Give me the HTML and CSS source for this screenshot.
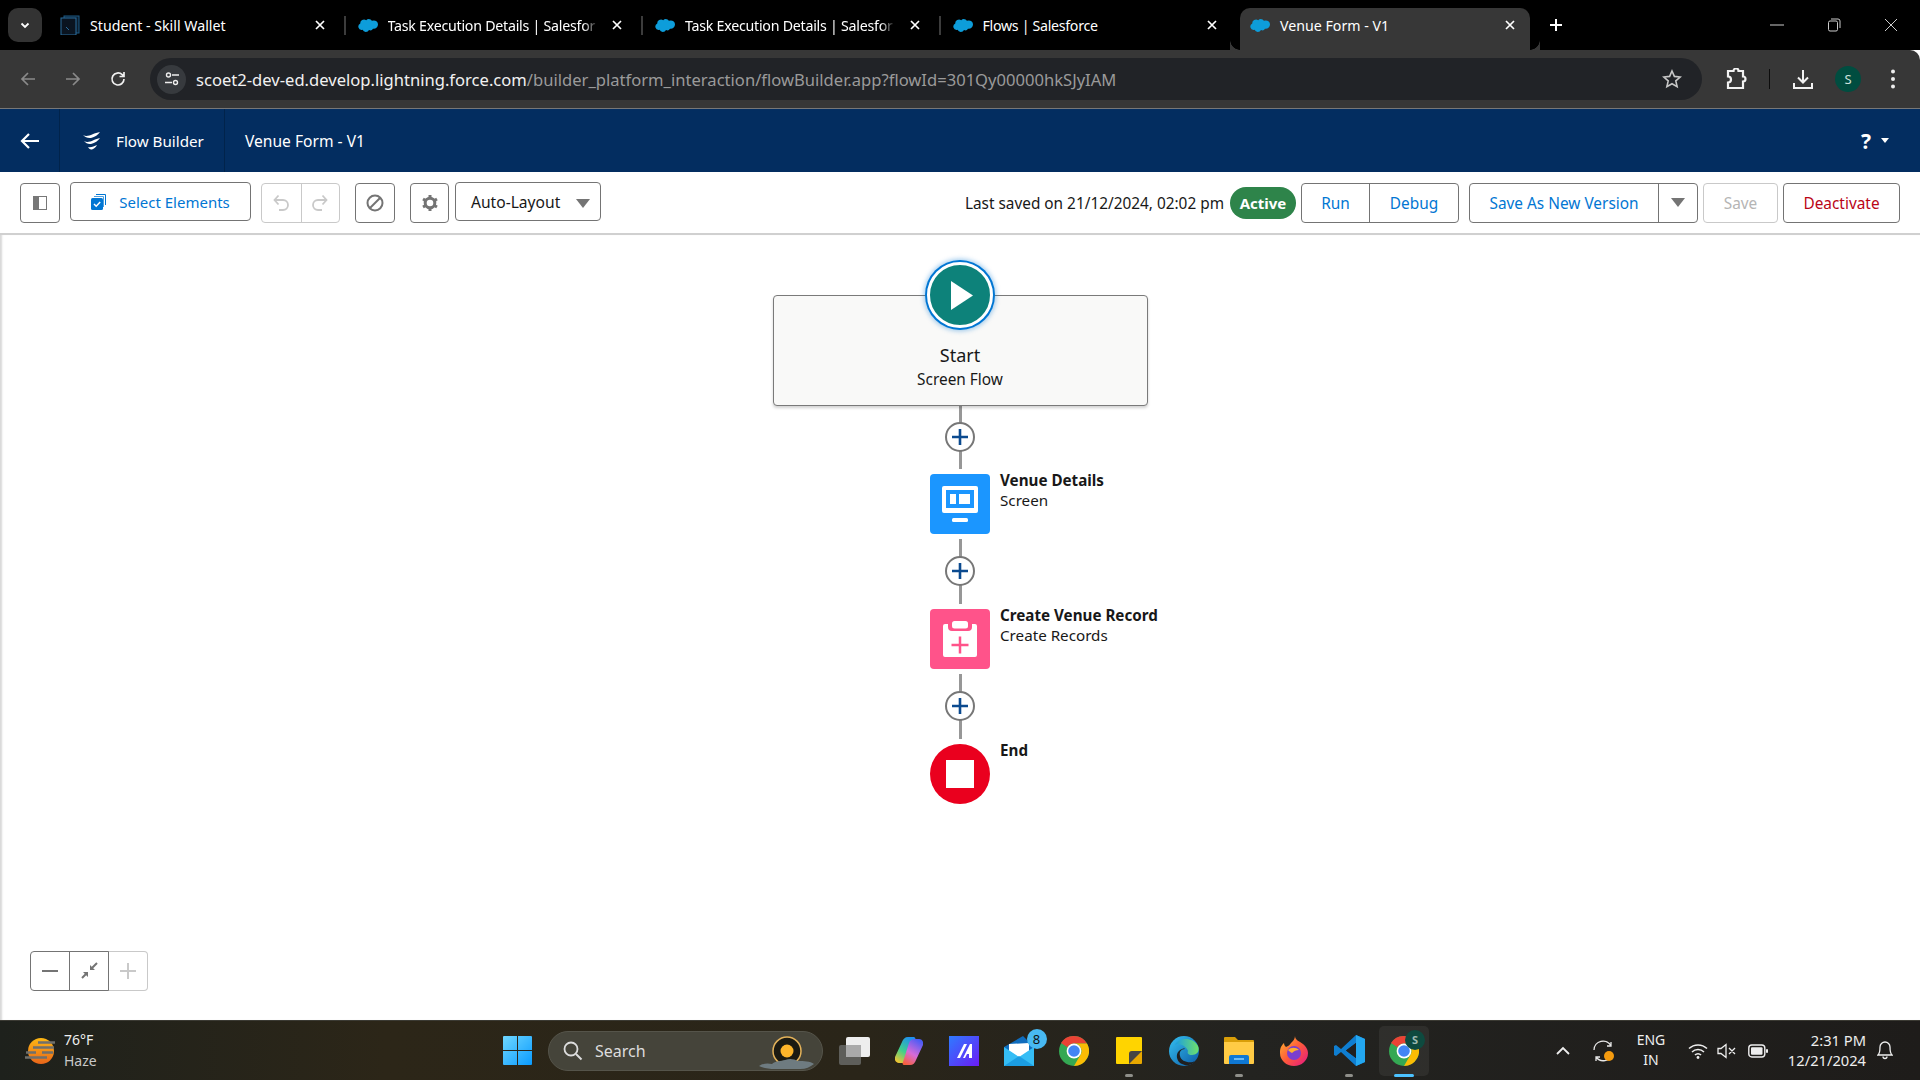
FILE: index.html
```html
<!DOCTYPE html>
<html lang="en">
<head>
<meta charset="utf-8">
<title>Venue Form - V1</title>
<link rel="stylesheet" href="styles.css">
</head>
<body>
<svg class="defs" width="0" height="0" aria-hidden="true">
  <defs>
    <symbol id="cloud" viewBox="0 0 20 14"><path fill="#0d9dda" d="M8.2 2.2A3.5 3.5 0 0 1 10.8 1a3.6 3.6 0 0 1 3.1 1.8 4.2 4.2 0 0 1 1.8-.4A4.2 4.2 0 0 1 20 6.600a4.200 4.200 0 0 1-5 4.100 3 3 0 0 1-4 1.300 3.500 3.500 0 0 1-6.400-.2 3.200 3.200 0 0 1-.7.1A3.300 3.300 0 0 1 2.300 5.600 3.700 3.700 0 0 1 8.200 2.200Z"/></symbol>
    <symbol id="x" viewBox="0 0 12 12"><path d="M2 2l8 8M10 2l-8 8" stroke="#fff" stroke-width="1.7" fill="none"/></symbol>
    <symbol id="plus" viewBox="0 0 30 30"><circle cx="15" cy="15" r="14" fill="#fff" stroke="#777" stroke-width="2"/><path d="M15 7v16M7 15h16" stroke="#0b4a8f" stroke-width="2.6" fill="none"/></symbol>
    <symbol id="chrome" viewBox="0 0 30 30">
      <circle cx="15" cy="15" r="15" fill="#34a853"/>
      <path d="M15 0a15 15 0 0 1 13 7.5H15a7.5 7.5 0 0 0-6.5 3.75L2 7A15 15 0 0 1 15 0Z" fill="#ea4335"/>
      <path d="M28 7.5A15 15 0 0 1 15 30l6.5-11.25A7.5 7.5 0 0 0 15 7.5Z" fill="#fbbc04"/>
      <circle cx="15" cy="15" r="7.4" fill="#fff"/><circle cx="15" cy="15" r="5.8" fill="#4285f4"/>
    </symbol>
  </defs>
</svg>

<header class="tabstrip">
  <button class="tabsearch"><svg width="12" height="12" viewBox="0 0 12 12"><path d="M2.5 4.5L6 8l3.5-3.5" stroke="#fff" stroke-width="1.8" fill="none"/></svg></button>
  <div class="tab">
    <svg class="favicon" viewBox="0 0 20 20"><rect x="4" y="1" width="15" height="17" fill="#0b1c2c" stroke="#1d5a86"/><rect x="1" y="3" width="15" height="17" fill="#0a1420" stroke="#2a6c9c"/><path d="M6 12l3 3" stroke="#2a6c9c"/></svg>
    <span class="tabtitle">Student - Skill Wallet</span>
    <svg class="tabx"><use href="#x"/></svg>
  </div>
  <div class="tab sep">
    <svg class="favicon"><use href="#cloud"/></svg>
    <span class="tabtitle fade">Task Execution Details | Salesfor</span>
    <svg class="tabx"><use href="#x"/></svg>
  </div>
  <div class="tab sep">
    <svg class="favicon"><use href="#cloud"/></svg>
    <span class="tabtitle fade">Task Execution Details | Salesfor</span>
    <svg class="tabx"><use href="#x"/></svg>
  </div>
  <div class="tab sep">
    <svg class="favicon"><use href="#cloud"/></svg>
    <span class="tabtitle tight">Flows | Salesforce</span>
    <svg class="tabx"><use href="#x"/></svg>
  </div>
  <div class="tab active">
    <svg class="favicon"><use href="#cloud"/></svg>
    <span class="tabtitle">Venue Form - V1</span>
    <svg class="tabx"><use href="#x"/></svg>
  </div>
  <svg class="newtab" width="16" height="16" viewBox="0 0 16 16"><path d="M8 2v12M2 8h12" stroke="#fff" stroke-width="2"/></svg>
  <div class="winctl">
    <svg width="14" height="14" viewBox="0 0 14 14"><path d="M0 7h14" stroke="#ccc"/></svg>
    <svg width="14" height="14" viewBox="0 0 14 14"><rect x="1.5" y="3" width="9" height="10" rx="1.5" fill="none" stroke="#ccc"/><path d="M4 1h7a2 2 0 0 1 2 2v7" fill="none" stroke="#ccc"/></svg>
    <svg width="14" height="14" viewBox="0 0 14 14"><path d="M1 1l12 12M13 1L1 13" stroke="#ccc"/></svg>
  </div>
</header>

<nav class="browserbar">
  <svg class="navico" width="18" height="18" viewBox="0 0 18 18"><path d="M16 9H3M9 3L3 9l6 6" stroke="#8a8a8a" stroke-width="1.7" fill="none"/></svg>
  <svg class="navico" width="18" height="18" viewBox="0 0 18 18"><path d="M2 9h13M9 3l6 6-6 6" stroke="#8a8a8a" stroke-width="1.7" fill="none"/></svg>
  <svg class="navico" width="18" height="18" viewBox="0 0 18 18"><path d="M15 9a6 6 0 1 1-1.8-4.3L15 6.5M15 2v4.5h-4.5" stroke="#f0f0f0" stroke-width="1.7" fill="none"/></svg>
  <div class="urlpill">
    <span class="siteinfo"><svg width="16" height="16" viewBox="0 0 16 16"><circle cx="4.5" cy="4" r="2" fill="none" stroke="#eee" stroke-width="1.4"/><path d="M8 4h7M1 11.5h7" stroke="#eee" stroke-width="1.4"/><circle cx="11.5" cy="11.5" r="2" fill="none" stroke="#eee" stroke-width="1.4"/></svg></span>
    <span class="url"><span class="host">scoet2-dev-ed.develop.lightning.force.com</span>/builder_platform_interaction/flowBuilder.app?flowId=301Qy00000hkSJyIAM</span>
    <svg class="star" width="20" height="20" viewBox="0 0 20 20"><path d="M10 2l2.4 5.4 5.8.6-4.4 3.9 1.3 5.7L10 14.7l-5.1 2.9 1.3-5.7L1.8 8l5.8-.6Z" fill="none" stroke="#c7c7c7" stroke-width="1.6"/></svg>
  </div>
  <svg class="extico" width="22" height="22" viewBox="0 0 22 22"><path d="M3 3h5.500a2.500 2.500 0 0 1 5 0H18v5.500a2.500 2.500 0 0 1 0 5V20H3v-5.500a3 3 0 0 0 3-3 3 3 0 0 0-3-3Z" fill="none" stroke="#f2f2f2" stroke-width="2.200"/></svg>
  <span class="barsep"></span>
  <svg class="dlico" width="22" height="22" viewBox="0 0 22 22"><path d="M11 2v12M6 9.5l5 5 5-5M2 15v5h18v-5" stroke="#f2f2f2" stroke-width="2" fill="none"/></svg>
  <span class="avatar">S</span>
  <svg class="kebab" width="6" height="22" viewBox="0 0 6 22"><circle cx="3" cy="3.5" r="2" fill="#eee"/><circle cx="3" cy="11" r="2" fill="#eee"/><circle cx="3" cy="18.5" r="2" fill="#eee"/></svg>
</nav>

<div class="appbar">
  <div class="appback"><svg width="20" height="18" viewBox="0 0 20 18"><path d="M19 9H2M9 2L2 9l7 7" stroke="#fff" stroke-width="2.2" fill="none"/></svg></div>
  <div class="appname">
    <svg width="20" height="18" viewBox="0 0 20 18"><path d="M1 3c5 3 10-2 17-3-2 3-5 5-9 6-3 .5-6-1-8-3ZM2 9c5 3 10-2 16-3-2 3-5 5-9 6-3 .5-5-1-7-3ZM6 15c3 1 6-1 9-2-1 2-3 4-5 4.500-2 .5-3-1-4-2.500Z" fill="#fff"/></svg>
    <span>Flow Builder</span>
  </div>
  <div class="flowname">Venue Form - V1</div>
  <div class="help"><span class="q">?</span><span class="caret"></span></div>
</div>

<div class="toolbar">
  <button class="btn iconbtn"><svg width="14" height="14" viewBox="0 0 14 14"><rect x=".5" y=".5" width="13" height="13" fill="#fff" stroke="#777"/><rect x="1" y="1" width="5" height="12" fill="#777"/></svg></button>
  <button class="btn select"><svg width="16" height="18" viewBox="0 0 16 18"><path d="M5 1h9a1 1 0 0 1 1 1v10h-1V2H5Z" fill="#0176d3"/><path d="M3 3h9a1 1 0 0 1 1 1v10h-1V4H3Z" fill="#0176d3" opacity=".7"/><rect y="5" width="12" height="12" rx="1.5" fill="#0176d3"/><path d="M3 11l2.2 2.2L9.2 9" stroke="#fff" stroke-width="1.5" fill="none"/></svg>Select Elements</button>
  <div class="group disabled">
    <button class="gbtn"><svg width="16" height="18" viewBox="0 0 16 18"><path d="M2 6h8a4.500 4.500 0 0 1 0 10H6M5.500 1.500L1.500 6l4 4.500" stroke="#c9c9c9" stroke-width="1.800" fill="none"/></svg></button>
    <button class="gbtn"><svg width="16" height="18" viewBox="0 0 16 18"><path d="M14 6H6a4.500 4.500 0 0 0 0 10h4M10.500 1.500l4 4.500-4 4.500" stroke="#c9c9c9" stroke-width="1.800" fill="none"/></svg></button>
  </div>
  <button class="btn iconbtn ban"><svg width="18" height="18" viewBox="0 0 18 18"><circle cx="9" cy="9" r="7.500" fill="none" stroke="#747474" stroke-width="2"/><path d="M4 14L14 4" stroke="#747474" stroke-width="2"/></svg></button>
  <button class="btn iconbtn gear"><svg width="18" height="18" viewBox="0 0 18 18"><circle cx="9" cy="9" r="4.800" fill="none" stroke="#747474" stroke-width="3"/><path d="M9 1v3M9 14v3M2 5l2.600 1.500M13.400 11.500L16 13M2 13l2.600-1.500M13.400 6.500L16 5" stroke="#747474" stroke-width="3"/></svg></button>
  <button class="btn modeselect">Auto-Layout<span class="tri"></span></button>

  <div class="rightside">
    <span class="saved">Last saved on 21/12/2024, 02:02 pm</span>
    <span class="badge">Active</span>
    <div class="group run">
      <button class="gbtn link wrun">Run</button>
      <button class="gbtn link wdebug">Debug</button>
    </div>
    <div class="group saveas">
      <button class="gbtn link wsaveas">Save As New Version</button>
      <button class="gbtn wdrop"><span class="tri"></span></button>
    </div>
    <button class="btn save">Save</button>
    <button class="btn deactivate">Deactivate</button>
  </div>
</div>

<main class="canvas">
  <div class="startcard">
    <div class="startcircle"><svg width="24" height="31" viewBox="0 0 24 31"><path d="M1 1l22 14.500L1 30Z" fill="#fff"/></svg></div>
    <div class="starttitle">Start</div>
    <div class="startsub">Screen Flow</div>
  </div>
  <div class="connector first"><svg class="plusico"><use href="#plus"/></svg></div>
  <div class="node">
    <div class="nodeicon blue"><svg width="60" height="60" viewBox="0 0 60 60"><rect x="12" y="12" width="36" height="27" rx="2" fill="#fff"/><rect x="16" y="16" width="28" height="18" fill="#1b96ff"/><rect x="20" y="20" width="6" height="10" fill="#fff"/><rect x="29" y="20" width="11" height="10" fill="#fff"/><rect x="22" y="44" width="16" height="4" rx="1.500" fill="#fff"/></svg></div>
    <div class="nodelabel"><b>Venue Details</b><span>Screen</span></div>
  </div>
  <div class="connector"><svg class="plusico"><use href="#plus"/></svg></div>
  <div class="node">
    <div class="nodeicon pink"><svg width="60" height="60" viewBox="0 0 60 60"><path d="M15 15h3v3a4 4 0 0 0 4 4h16a4 4 0 0 0 4-4v-3h3a2 2 0 0 1 2 2v29a2 2 0 0 1-2 2H15a2 2 0 0 1-2-2V17a2 2 0 0 1 2-2Z" fill="#fff"/><rect x="22" y="12" width="16" height="7.500" rx="2.500" fill="#fff"/><path d="M30 27.500v17M21.500 36h17" stroke="#ff538a" stroke-width="2.500"/></svg></div>
    <div class="nodelabel"><b>Create Venue Record</b><span>Create Records</span></div>
  </div>
  <div class="connector"><svg class="plusico"><use href="#plus"/></svg></div>
  <div class="node">
    <div class="nodeicon red"><span class="stop"></span></div>
    <div class="nodelabel"><b>End</b></div>
  </div>

  <div class="zoomctl">
    <button class="zbtn"><svg width="18" height="18" viewBox="0 0 18 18"><path d="M1 9h16" stroke="#747474" stroke-width="2"/></svg></button>
    <button class="zbtn"><svg width="18" height="18" viewBox="0 0 18 18"><path d="M17 1l-5 5M7 11l-5 5" stroke="#747474" stroke-width="2"/><path d="M10 3v5h5ZM8 15v-5H3Z" fill="#747474"/></svg></button>
    <button class="zbtn off"><svg width="18" height="18" viewBox="0 0 18 18"><path d="M1 9h16M9 1v16" stroke="#c9c9c9" stroke-width="2"/></svg></button>
  </div>
</main>

<footer class="taskbar">
  <div class="weather">
    <svg width="30" height="28" viewBox="0 0 30 28"><defs><linearGradient id="sun" x1="0" y1="0" x2="0" y2="1"><stop offset="0" stop-color="#fdb813"/><stop offset="1" stop-color="#e8651a"/></linearGradient></defs><circle cx="16" cy="14" r="13" fill="url(#sun)"/><path d="M13 5.500h17M8 10.500h21M1 15.500h10M17 15.500h11M0 20.500h22" stroke="#70706c" stroke-width="2.600"/></svg>
    <div class="wtext"><span>76°F</span><span class="dim">Haze</span></div>
  </div>
  <div class="tbicons">
    <div class="tbcell start"><svg width="29" height="29" viewBox="0 0 29 29"><defs><linearGradient id="win" x1="0" y1="0" x2="1" y2="1"><stop offset="0" stop-color="#6fd7ff"/><stop offset="1" stop-color="#0a9bff"/></linearGradient></defs><path d="M1 0h13v14H0V1a1 1 0 0 1 1-1ZM15 0h13a1 1 0 0 1 1 1v13H15ZM0 15h14v14H1a1 1 0 0 1-1-1ZM15 15h14v13a1 1 0 0 1-1 1H15Z" fill="url(#win)"/></svg></div>
    <div class="searchbox">
      <svg width="20" height="20" viewBox="0 0 20 20"><circle cx="8" cy="8" r="6.500" fill="none" stroke="#ddd" stroke-width="1.800"/><path d="M13 13l5.500 5.500" stroke="#ddd" stroke-width="2"/></svg>
      <span>Search</span>
      <svg class="sunart" width="56" height="34" viewBox="0 0 56 34"><circle cx="28" cy="15" r="14" fill="#1b1a12" stroke="#e3b25a" stroke-width="1.500"/><circle cx="28" cy="15" r="6.500" fill="#fdb52a"/><path d="M0 30c5-3 9-3 13-2 3-3 9-3 13-4 5-2 9-1 13 1 6 0 12 0 16 3-4 3-8 5-14 5H16C10 33 4 32 0 30Z" fill="#6e7b80"/></svg>
    </div>
    <div class="tbcell"><svg width="31" height="28" viewBox="0 0 31 28"><rect x="0" y="8" width="22" height="20" rx="2" fill="#5e5e5a"/><rect x="7" y="0" width="24" height="20" rx="2" fill="#eee"/><rect x="7" y="8" width="15" height="12" fill="#aaa"/></svg></div>
    <div class="tbcell"><svg width="28" height="28" viewBox="0 0 28 28"><defs><linearGradient id="cp1" x1=".7" y1="0" x2=".2" y2="1"><stop offset="0" stop-color="#1f8ff0"/><stop offset=".55" stop-color="#3fd08c"/><stop offset="1" stop-color="#f2c531"/></linearGradient><linearGradient id="cp2" x1=".7" y1="0" x2=".2" y2="1"><stop offset="0" stop-color="#4b5cf5"/><stop offset=".55" stop-color="#d66bd9"/><stop offset="1" stop-color="#f7603d"/></linearGradient></defs><path d="M7 5C8 2 10 0 13 0h5c2 0 3 1 2 3l-6 19c-1 3-3 4-6 4H4c-3 0-5-3-4-6Z" fill="url(#cp1)"/><path d="M21 23c-1 3-3 5-6 5h-5c-2 0-3-1-2-3l6-19c1-3 3-4 6-4h4c3 0 5 3 4 6Z" fill="url(#cp2)"/></svg></div>
    <div class="tbcell"><svg width="30" height="30" viewBox="0 0 30 30"><defs><linearGradient id="ms" x1="0" y1="0" x2="1" y2="1"><stop offset="0" stop-color="#2f7bff"/><stop offset="1" stop-color="#6a1cf5"/></linearGradient></defs><rect width="30" height="30" fill="url(#ms)"/><path d="M8 22L15 8h3l-7 14ZM14 22L21 8h2v14h-3v-4h-2l-2 4Z" fill="#fff"/></svg></div>
    <div class="tbcell"><svg width="30" height="30" viewBox="0 0 30 30"><path d="M0 11L19 0l11 11v19H0Z" fill="#0f6cbd"/><path d="M5 8l20-1v10l-10 5L5 15Z" fill="#fff"/><path d="M0 11l15 10 15-10v19H0Z" fill="#35bdf5"/><path d="M0 30l15-10 15 10Z" fill="#1b9de2"/></svg><span class="mailbadge">8</span></div>
    <div class="tbcell"><svg width="30" height="30"><use href="#chrome"/></svg></div>
    <div class="tbcell"><svg width="26" height="27" viewBox="0 0 26 27"><path d="M1 0h24a1 1 0 0 1 1 1v17l-8 9H1a1 1 0 0 1-1-1V1a1 1 0 0 1 1-1Z" fill="#ffd400"/><path d="M26 14v12a1 1 0 0 1-1 1H13V17a3 3 0 0 1 3-3Z" fill="#e8a800"/><path d="M13 27V17a3 3 0 0 1 3-3h10Z" fill="#444"/></svg><i class="pip"></i></div>
    <div class="tbcell"><svg width="30" height="30" viewBox="0 0 30 30"><defs><linearGradient id="ed" x1="0" y1="0" x2="1" y2="1"><stop offset="0" stop-color="#35c1f1"/><stop offset="1" stop-color="#0c59a4"/></linearGradient><linearGradient id="ed2" x1="0" y1="0" x2="1" y2="0"><stop offset="0" stop-color="#1b9de2"/><stop offset="1" stop-color="#6ee06a"/></linearGradient></defs><circle cx="15" cy="15" r="15" fill="url(#ed)"/><path d="M6 9C9 2 23 0 29 10c2 5-1 9-6 9-4 0-5-2-4-4-1-4-9-9-13-6Z" fill="url(#ed2)"/><path d="M16 13c-4 0-6 3-5 7 1 5 7 7 13 6 2-1 2 0 0 1-3 3-10 3-14-1-3-4-3-9 1-12 2-1 4-2 5-1Z" fill="#202020"/></svg></div>
    <div class="tbcell"><svg width="30" height="27" viewBox="0 0 30 27"><path d="M1 0h10l3 3h15a1 1 0 0 1 1 1v4H0V1a1 1 0 0 1 1-1Z" fill="#d99e08"/><path d="M0 5h30v21a1 1 0 0 1-1 1H1a1 1 0 0 1-1-1Z" fill="#ffcb45"/><path d="M5 27v-7a2 2 0 0 1 2-2h16a2 2 0 0 1 2 2v7Z" fill="#0f78d4"/><path d="M10 22h10" stroke="#8ed2ff" stroke-width="1.500"/></svg><i class="pip"></i></div>
    <div class="tbcell"><svg width="28" height="30" viewBox="0 0 28 30"><defs><linearGradient id="ff" x1="0" y1="0" x2="1" y2="1"><stop offset="0" stop-color="#ffbc2d"/><stop offset=".5" stop-color="#ff5a3a"/><stop offset="1" stop-color="#e31587"/></linearGradient></defs><path d="M15 0c0 4 4 5 8 8 4 3 5 7 5 9a14 13 0 0 1-28 0c0-5 1-7 4-10 0 2 1 3 2 4 2-1 4-2 5-4 2-2 4-4 4-7Z" fill="url(#ff)"/><circle cx="14" cy="17" r="7" fill="#7a3fce"/><path d="M8 14c3-3 8-3 11 0-3 0-5 1-7 3-2-1-3-2-4-3Z" fill="#ffb02e"/></svg></div>
    <div class="tbcell"><svg width="31" height="31" viewBox="0 0 31 31"><path d="M22 0l9 4v23l-9 4L7 17l-5 4-2-1v-9l2-1 5 4Z" fill="#0f7ed1"/><path d="M22 0l9 4v23l-9 4Z" fill="#23a7f0"/><path d="M22 8L12 15.500 22 23Z" fill="#202020"/><path d="M22 8v15l-10-7.500Z" fill="#202020"/></svg><i class="pip"></i></div>
    <div class="tbcell current"><svg width="30" height="30"><use href="#chrome"/></svg><span class="profilebadge">S</span><i class="pip wide"></i></div>
  </div>
  <div class="tray">
    <svg class="ic-caret" width="14" height="10" viewBox="0 0 14 10"><path d="M1 8l6-6 6 6" stroke="#eee" stroke-width="1.800" fill="none"/></svg>
    <div class="syncwrap"><svg width="22" height="22" viewBox="0 0 22 22"><path d="M1 10a9 9 0 0 1 17-4M18 2v4h-4M19 14a9 9 0 0 1-16 3M3 21v-4h4" stroke="#e8e8e8" stroke-width="1.300" fill="none"/><circle cx="16" cy="16" r="5" fill="#f59b0f"/></svg></div>
    <div class="lang"><span>ENG</span><span>IN</span></div>
    <svg class="ic-wifi" width="20" height="16" viewBox="0 0 20 16"><path d="M1 5.500a13 13 0 0 1 18 0M4 9a8.500 8.500 0 0 1 12 0M7 12a4 4 0 0 1 6 0" stroke="#eee" stroke-width="1.500" fill="none"/><circle cx="10" cy="14.500" r="1.400" fill="#eee"/></svg>
    <svg class="ic-vol" width="20" height="16" viewBox="0 0 20 16"><path d="M1 5.500h3L9 1.500v13l-5-4H1ZM12 5l6 6M18 5l-6 6" stroke="#eee" stroke-width="1.300" fill="none"/></svg>
    <svg class="ic-batt" width="20" height="14" viewBox="0 0 20 14"><rect x=".8" y="1" width="16" height="12" rx="3" fill="none" stroke="#eee" stroke-width="1.400"/><rect x="3" y="3.200" width="11.500" height="7.600" rx="1" fill="#eee"/><rect x="18" y="5" width="2" height="4" rx="1" fill="#eee"/></svg>
    <div class="clock"><span>2:31 PM</span><span>12/21/2024</span></div>
    <svg class="ic-bell" width="16" height="19" viewBox="0 0 16 19"><path d="M8 1a5 5 0 0 1 5 5c0 3 0 6 2 8H1c2-2 2-5 2-8a5 5 0 0 1 5-5ZM6 15.500a2 2 0 0 0 4 0" stroke="#eee" stroke-width="1.300" fill="none"/></svg>
  </div>
</footer>
</body>
</html>
```

FILE: styles.css
```css
* { box-sizing: border-box; }
html, body { margin: 0; height: 100%; }
body {
  width: 1920px; height: 1080px; overflow: hidden;
  display: flex; flex-direction: column;
  font-family: "Noto Sans", "Open Sans", sans-serif;
  background: #fff; color: #181818;
}
button { font: inherit; background: none; border: 0; padding: 0; }
svg { display: block; flex: none; }
.defs { position: absolute; }

/* tab strip */
.tabstrip { height: 50px; background: #000; display: flex; align-items: flex-end; padding-left: 8px; flex: none; }
.tabsearch { width: 34px; height: 34px; background: #333; border-radius: 10px; display: flex; align-items: center; justify-content: center; margin: 0 5px 8px 0; }
.tab { width: 297.5px; height: 42px; display: flex; align-items: center; position: relative; padding: 0 19px 8px 13px; color: #fff; }
.tab.sep::before { content: ""; position: absolute; left: -1px; top: 8px; width: 2px; height: 19px; background: #3c3c3c; }
.tab.active { background: #373737; border-radius: 10px 10px 0 0; width: 290px; margin-left: 3px; padding-left: 10px; padding-right: 14px; }
.tab.active::before, .tab.active::after { content: ""; position: absolute; bottom: 0; width: 10px; height: 10px; background: radial-gradient(circle at 0 0, #000 9.5px, #373737 10px); }
.tab.active::after { right: -10px; }
.tab.active::before { left: -10px; background: radial-gradient(circle at 100% 0, #000 9.5px, #373737 10px); }
.favicon { width: 20px; height: 20px; }
.tabtitle { flex: 1; margin-left: 10px; font-size: 14.2px; line-height: 21px; white-space: nowrap; }
.tabtitle.tight { letter-spacing: -.3px; }
.tabtitle.fade { flex: none; width: 210px; letter-spacing: -.24px; -webkit-mask-image: linear-gradient(90deg, #000 93%, transparent); mask-image: linear-gradient(90deg, #000 93%, transparent); margin-right: auto; }
.tabx { width: 12px; height: 12px; }
.newtab { margin: 0 0 17px 18px; }
.winctl { margin-left: auto; display: flex; gap: 43px; align-self: flex-start; margin-top: 18px; padding-right: 22px; }

/* browser bar */
.browserbar { height: 59px; background: #373737; border-bottom: 1px solid #777; display: flex; align-items: center; padding-left: 19px; border-radius: 0 10px 0 0; flex: none; }
.navico { margin-right: 27px; }
.navico:nth-child(3) { margin-right: 23px; }
.urlpill { width: 1552px; height: 42px; background: #212327; border-radius: 21px; display: flex; align-items: center; padding-left: 7px; }
.siteinfo { width: 29px; height: 29px; background: #373a3e; border-radius: 50%; display: flex; align-items: center; justify-content: center; }
.url { margin-left: 10px; padding-top: 1px; font-size: 16.58px; color: #9a9a9a; white-space: nowrap; flex: 1; }
.host { color: #f1f1f1; }
.star { margin-right: 20px; }
.extico { margin-left: 23px; }
.barsep { width: 1px; height: 20px; background: #0c0c0c; margin-left: 22px; }
.dlico { margin-left: 22px; }
.avatar { width: 26px; height: 26px; border-radius: 50%; background: #004d40; color: #cfe0dc; font-size: 13px; display: flex; align-items: center; justify-content: center; margin-left: 21px; }
.kebab { margin-left: 29px; }

/* app bar */
.appbar { height: 63px; background: #032d60; color: #fff; display: flex; align-items: center; flex: none; font-size: 15.2px; }
.appback { width: 60px; height: 100%; border-right: 1px solid #01234b; display: flex; align-items: center; justify-content: center; }
.appname { width: 165px; height: 100%; border-right: 1px solid #01234b; display: flex; align-items: center; padding-left: 22px; gap: 14px; }
.flowname { margin-left: 20px; font-size: 15.6px; }
.help { margin-left: auto; padding-right: 31px; display: flex; align-items: center; gap: 10px; }
.q { font-size: 21px; font-weight: 700; }
.caret { border: 4px solid transparent; border-top: 5px solid #fff; border-bottom: 0; }

/* toolbar */
.toolbar { height: 63px; border-bottom: 2px solid #d0d0d0; display: flex; align-items: center; padding: 0 20px; flex: none; font-size: 15.4px; }
.btn { height: 40px; background: #fff; border: 1px solid #747474; border-radius: 4px; display: flex; align-items: center; justify-content: center; color: #181818; }
.iconbtn { width: 40px; }
.select { width: 181px; height: 39px; margin: 0 0 2px 10px; gap: 12px; color: #0176d3; font-size: 15px; }
.group { height: 40px; border: 1px solid #747474; border-radius: 4px; display: flex; background: #fff; }
.group.disabled { border-color: #c9c9c9; margin-left: 10px; }
.gbtn { height: 100%; display: flex; align-items: center; justify-content: center; width: 38.5px; }
.gbtn + .gbtn { border-left: 1px solid #747474; }
.disabled .gbtn + .gbtn { border-left-color: #c9c9c9; }
.ban { margin-left: 15px; }
.gear { margin-left: 15px; width: 39px; }
.modeselect { width: 146px; height: 39px; margin: 0 0 2px 6px; justify-content: space-between; padding: 0 10px 0 15px; font-size: 15.6px; }
.modeselect .tri { margin-top: 3px; }
.tri { width: 0; height: 0; border: 7px solid transparent; border-top: 9px solid #747474; border-bottom: 0; display: block; }
.rightside { margin-left: auto; display: flex; align-items: center; }
.saved { font-size: 15.36px; padding-top: 2px; }
.badge { background: #2e844a; color: #fff; font-weight: 700; width: 66px; height: 32px; border-radius: 16px; display: flex; align-items: center; justify-content: center; margin-left: 6px; font-size: 15px; }
.run { margin-left: 5px; }
.link { color: #0176d3; padding-top: 1px; }
.wrun { width: 67px; }
.wdebug { width: 89px; }
.saveas { margin-left: 10px; }
.wsaveas { width: 188px; }
.wdrop { width: 39px; }
.save { width: 75px; margin-left: 5px; border-color: #c9c9c9; color: #b5b5b5; padding-top: 1px; }
.deactivate { width: 117px; margin-left: 5px; color: #ba0517; padding-top: 1px; }

/* canvas */
.canvas { flex: 1; position: relative; display: flex; flex-direction: column; align-items: center; padding-top: 60px; box-shadow: inset 3px 0 2px -1px #d8d8d8; }
.startcard { width: 375px; height: 111px; background: #f9f9f8; border: 1px solid #7a7a7a; border-radius: 4px; box-shadow: 0 2px 3px rgba(0,0,0,.18); position: relative; text-align: center; padding-top: 46px; }
.startcircle { position: absolute; left: 50%; top: -34px; width: 66px; height: 66px; margin-left: -33px; border-radius: 50%; background: #0d827a; border: 3px solid #fff; box-shadow: 0 0 0 2px #0176d3, 0 0 5px 3px rgba(1,118,211,.4); display: flex; align-items: center; justify-content: center; }
.startcircle svg { margin-left: 4px; }
.starttitle { font-size: 18px; line-height: 26px; }
.startsub { font-size: 15.4px; line-height: 22px; margin-top: 1px; }
.connector { width: 3px; height: 65px; background: #979797; margin: 5px 0; padding-bottom: 1px; display: flex; align-items: center; justify-content: center; flex: none; }
.connector.first { height: 63px; margin-top: 0; padding-bottom: 2px; }
.plusico { width: 30px; height: 30px; }
.node { position: relative; width: 60px; height: 60px; flex: none; }
.nodeicon { width: 60px; height: 60px; border-radius: 4px; display: flex; align-items: center; justify-content: center; }
.blue { background: #1b96ff; }
.pink { background: #ff538a; }
.red { background: #ea001e; border-radius: 50%; }
.stop { width: 28px; height: 28px; background: #fff; }
.nodelabel { position: absolute; left: 70px; top: -4px; width: 240px; font-size: 15.2px; line-height: 20px; display: flex; flex-direction: column; }
.nodelabel b { font-weight: 700; }
.zoomctl { position: absolute; left: 30px; bottom: 29px; height: 40px; display: flex; background: #fff; }
.zbtn { width: 40px; height: 40px; border: 1px solid #747474; margin-left: -1px; display: flex; align-items: center; justify-content: center; }
.zbtn:first-child { border-radius: 4px 0 0 4px; margin-left: 0; }
.zbtn.off { border-color: #c9c9c9; border-left-color: #747474; border-radius: 0 4px 4px 0; }

/* taskbar */
.taskbar { height: 60px; flex: none; display: flex; align-items: center; border-top: 1px solid #3b3a33; color: #eee; background: linear-gradient(90deg, #1e211c 0, #2c2618 20%, #2a2519 45%, #232320 65%, #1e1c1a 100%); font-size: 14px; position: relative; }
.weather { display: flex; align-items: center; gap: 9px; width: 490px; padding-left: 25px; }
.wtext { display: flex; flex-direction: column; font-size: 14px; line-height: 21px; padding-bottom: 1px; }
.dim { color: #c8c8c8; }
.tbicons { display: flex; align-items: center; }
.tbcell { width: 55px; height: 50px; display: flex; align-items: center; justify-content: center; position: relative; }
.start { margin-right: 3px; }
.searchbox { width: 275px; height: 40px; border-radius: 20px; background: #45443a; border: 1px solid #55544a; display: flex; align-items: center; padding-left: 14px; gap: 12px; position: relative; margin-right: 3.5px; font-size: 16px; color: #ddd; }
.sunart { position: absolute; right: 7px; top: 4px; }
.mailbadge { position: absolute; right: 0; top: 3px; width: 20px; height: 20px; border-radius: 50%; background: #48b9f2; color: #111; font-size: 13px; display: flex; align-items: center; justify-content: center; }
.pip { position: absolute; left: 50%; margin-left: -4px; bottom: -1px; width: 8px; height: 3px; border-radius: 2px; background: #8f8f8a; }
.pip.wide { width: 20px; margin-left: -10px; background: #4cc2ff; }
.current { background: rgba(255,255,255,.06); border-radius: 5px; width: 50px; margin-left: 2.5px; }
.profilebadge { position: absolute; right: 4px; top: 4px; width: 20px; height: 20px; border-radius: 50%; background: #0e4a3f; color: #9fb9b2; font-size: 11px; font-weight: 700; display: flex; align-items: center; justify-content: center; }
.tray { position: absolute; left: 1556px; right: 0; top: 0; bottom: 0; display: flex; align-items: center; }
.syncwrap { margin-left: 23px; }
.lang { display: flex; flex-direction: column; align-items: center; width: 40px; margin-left: 16px; line-height: 20px; padding-bottom: 1px; }
.ic-wifi { margin-left: 17px; }
.ic-vol { margin-left: 9px; }
.ic-batt { margin-left: 11px; }
.clock { display: flex; flex-direction: column; align-items: flex-end; line-height: 20px; width: 90px; margin-left: 8px; padding-bottom: 1px; font-size: 14.7px; white-space: nowrap; }
.ic-bell { margin-left: 11px; }
```
